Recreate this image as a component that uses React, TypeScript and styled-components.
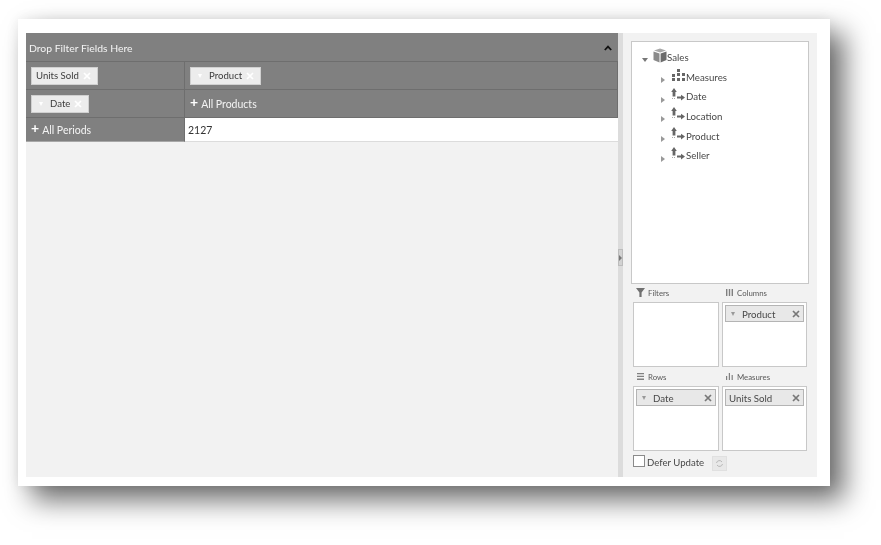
import styled, { createGlobalStyle } from "styled-components";

const GlobalStyle = createGlobalStyle`
    html, body {
        margin: 0;
        background-color: white;
    }
    body {
        font-family: Lato, "Open Sans", sans-serif;
    }
`;

const Page = styled.div`
    width: 881px;
    height: 545px;
    padding: 19px 0 0 18px;
    box-sizing: border-box;
    overflow: hidden;
`;

const Frame = styled.div`
    width: 812px;
    height: 467px;
    box-sizing: border-box;
    padding: 14px 13px 9px 8px;
    background-color: white;
    box-shadow: 14px 14px 26px rgba(0, 0, 0, 0.58), 0 0 12px rgba(0, 0, 0, 0.07);
`;

const Shell = styled.div`
    display: flex;
    height: 100%;
    background-color: #f2f2f2;
    filter: blur(0.3px);
`;

//Left pivot grid
const Pivot = styled.div`
    width: 592px;
    flex-shrink: 0;
`;

const FilterBar = styled.div`
    height: 29px;
    box-sizing: border-box;
    display: flex;
    align-items: center;
    justify-content: space-between;
    padding: 2px 6px 0 3px;
    background-color: #808080;
    border-bottom: 1px solid #6e6e6e;
    color: #f4f4f4;
    font-size: 10.4px;
`;

const PivotRow = styled.div<{ $h: number }>`
    display: grid;
    grid-template-columns: 159px 1fr;
    height: ${(props) => props.$h}px;
`;

const HeadCell = styled.div<{ $last?: boolean }>`
    display: flex;
    align-items: center;
    padding-left: 5px;
    background-color: #808080;
    border-bottom: 1px solid ${(props) => (props.$last ? "#a8a8a8" : "#6e6e6e")};
    border-right: 1px solid #6e6e6e;
    color: #f4f4f4;
    font-size: 10.5px;
`;

const ValueCell = styled.div`
    display: flex;
    align-items: center;
    padding-left: 3px;
    background-color: white;
    border-bottom: 1px solid #dcdcdc;
    color: #333;
    font-size: 10.5px;
`;

const Plus = styled.span`
    font-size: 14px;
    line-height: 10px;
    font-weight: 700;
    margin: -4px 3px 0 0;
    color: white;
`;

const GridChip = styled.div`
    display: flex;
    align-items: center;
    height: 16px;
    padding: 0 6px 0 4px;
    background-color: #ececec;
    border: 1px solid #d0d0d0;
    color: #3c3c3c;
    font-size: 9.6px;
`;

const ChipArrow = styled.span`
    width: 0;
    height: 0;
    border-left: 2.5px solid transparent;
    border-right: 2.5px solid transparent;
    border-top: 4px solid white;
    margin: 0 7px 0 3px;
`;

const ChipClose = styled.span<{ $color: string }>`
    display: flex;
    margin-left: 4px;
    color: ${(props) => props.$color};
`;

//Splitter
const Splitter = styled.div`
    width: 5px;
    flex-shrink: 0;
    display: flex;
    align-items: center;
    background-color: #dcdcdc;
`;

const SplitterHandle = styled.div`
    width: 5px;
    height: 17px;
    margin-top: 5px;
    display: flex;
    align-items: center;
    justify-content: center;
    background-color: #d2d2d2;
    border: 1px solid #bcbcbc;
    box-sizing: border-box;
    &::after {
        content: "";
        border-top: 3.5px solid transparent;
        border-bottom: 3.5px solid transparent;
        border-left: 3px solid #777;
    }
`;

//Right field list
const FieldPanel = styled.div`
    flex: 1;
    padding: 8px 8px 0 8px;
    display: flex;
    flex-direction: column;
`;

const TreeBox = styled.div`
    height: 243px;
    box-sizing: border-box;
    background-color: white;
    border: 1px solid #c8c8c8;
    padding: 5px 0 0 10px;
    color: #484848;
    font-size: 9.7px;
`;

const TreeRow = styled.div<{ $child?: boolean }>`
    display: flex;
    align-items: center;
    height: 19.7px;
    padding-left: ${(props) => (props.$child ? 19 : 0)}px;
`;

const Expander = styled.span<{ $open?: boolean }>`
    width: 0;
    height: 0;
    margin-top: 7px;
    ${(props) =>
        props.$open
            ? `border-left: 3.5px solid transparent;
               border-right: 3.5px solid transparent;
               border-top: 4px solid #777;
               margin-right: 5px;`
            : `border-top: 3.5px solid transparent;
               border-bottom: 3.5px solid transparent;
               border-left: 4px solid #999;
               margin-right: 6px;`}
`;

const TreeIcon = styled.svg`
    flex-shrink: 0;
    margin-top: -3px;
`;

const ZoneGrid = styled.div`
    display: grid;
    grid-template-columns: 86px 85px;
    column-gap: 3px;
    margin: 1px 0 0 2px;
`;

const Zone = styled.div`
    display: flex;
    flex-direction: column;
`;

const ZoneTitle = styled.div`
    height: 15px;
    padding: 0 0 2px 3px;
    display: flex;
    align-items: center;
    gap: 3px;
    color: #585858;
    font-size: 7.8px;
`;

const ZoneBox = styled.div`
    height: 65px;
    box-sizing: border-box;
    background-color: white;
    border: 1px solid #c8c8c8;
    padding: 2px;
    margin-bottom: 2px;
`;

const FieldChip = styled.div`
    height: 17px;
    box-sizing: border-box;
    display: flex;
    align-items: center;
    padding: 0 3px 0 3px;
    background-color: #e8e8e8;
    border: 1px solid #b4b4b4;
    color: #484848;
    font-size: 9.7px;
`;

const FieldArrow = styled.span`
    width: 0;
    height: 0;
    border-left: 2.5px solid transparent;
    border-right: 2.5px solid transparent;
    border-top: 4px solid #999;
    margin: 0 7px 0 2px;
`;

const FieldName = styled.span`
    flex: 1;
`;

const DeferRow = styled.div`
    display: flex;
    align-items: center;
    margin: 0 0 0 2px;
    color: #484848;
    font-size: 9.6px;
`;

const CheckBox = styled.span`
    width: 10px;
    height: 10px;
    background-color: white;
    border: 1px solid #8a8a8a;
    margin: -3px 2px 0 0;
`;

const RefreshButton = styled.span`
    display: flex;
    align-items: center;
    justify-content: center;
    width: 13px;
    height: 13px;
    margin: 3px 0 0 8px;
    background-color: #e8e8e8;
    border: 1px solid #e0e0e0;
`;

function CloseIcon({ color }: { color: string }) {
    return (
        <ChipClose $color={color}>
            <svg width="8" height="8" viewBox="0 0 8 8">
                <path d="M1 1 7 7M7 1 1 7" stroke="currentColor" strokeWidth="1.7" />
            </svg>
        </ChipClose>
    );
}

function CubeIcon() {
    return (
        <TreeIcon width="14" height="15" viewBox="0 0 14 15">
            <path d="M1 2.5 7 .5l6 2-5.8 2z" fill="#a8a8a8" />
            <path d="M.5 3.5l6 2v9l-6-2.5z" fill="#8a8a8a" />
            <path d="M7.6 5.5l5.9-2V12l-5.9 2.5z" fill="#6c6c6c" />
        </TreeIcon>
    );
}

function MeasuresIcon() {
    return (
        <TreeIcon width="15" height="14" viewBox="0 0 15 14">
            <path d="M1 6h3v3H1zM1 10h3v3H1zM6 1h3v3H6zM6 5h3v3H6zM6 10h3v3H6zM11 5h3v3h-3zM11 10h3v3h-3z" fill="#666" />
        </TreeIcon>
    );
}

function HierarchyIcon() {
    return (
        <TreeIcon width="15" height="14" viewBox="0 0 15 14">
            <path d="M3 0 5.8 4H4.4v4.5H1.6V4H.2z" fill="#666" />
            <path d="M6 8.6h4V6.8l4 2.8-4 2.8v-1.9H6z" fill="#666" />
            <path d="M1 10.5h1M3 10.5h1" stroke="#a8a8a8" strokeWidth="1" />
        </TreeIcon>
    );
}

function FilterIcon() {
    return (
        <svg width="9" height="9" viewBox="0 0 9 9">
            <path d="M0 0h9L5.6 4.5V9H3.4V4.5z" fill="#707070" />
        </svg>
    );
}

function ColumnsIcon() {
    return (
        <svg width="9" height="9" viewBox="0 0 9 9">
            <path d="M1 1h1.4v7H1zM3.8 1h1.4v7H3.8zM6.6 1H8v7H6.6z" fill="#808080" />
        </svg>
    );
}

function RowsIcon() {
    return (
        <svg width="9" height="9" viewBox="0 0 9 9">
            <path d="M1 1h7v1.3H1zM1 3.8h7v1.3H1zM1 6.6h7v1.3H1z" fill="#808080" />
        </svg>
    );
}

function BarsIcon() {
    return (
        <svg width="9" height="9" viewBox="0 0 9 9">
            <path d="M1 4h1.2v4H1zM3.8 1h1.2v7H3.8zM6.6 3H7.8v5H6.6z" fill="#808080" />
        </svg>
    );
}

const dimensions = ["Date", "Location", "Product", "Seller"];

function App() {
    return (
        <Page>
            <GlobalStyle />
            <Frame>
                <Shell>
                    <Pivot>
                        <FilterBar>
                            Drop Filter Fields Here
                            <svg width="8" height="6" viewBox="0 0 8 6">
                                <path d="M0.8 5 4 1.6 7.2 5" fill="none" stroke="#111" strokeWidth="1.8" />
                            </svg>
                        </FilterBar>
                        <PivotRow $h={28}>
                            <HeadCell>
                                <GridChip>
                                    Units Sold
                                    <CloseIcon color="#fff" />
                                </GridChip>
                            </HeadCell>
                            <HeadCell>
                                <GridChip>
                                    <ChipArrow />
                                    Product
                                    <CloseIcon color="#fff" />
                                </GridChip>
                            </HeadCell>
                        </PivotRow>
                        <PivotRow $h={28}>
                            <HeadCell>
                                <GridChip>
                                    <ChipArrow />
                                    Date
                                    <CloseIcon color="#fff" />
                                </GridChip>
                            </HeadCell>
                            <HeadCell>
                                <Plus>+</Plus>
                                All Products
                            </HeadCell>
                        </PivotRow>
                        <PivotRow $h={24}>
                            <HeadCell $last>
                                <Plus>+</Plus>
                                All Periods
                            </HeadCell>
                            <ValueCell>2127</ValueCell>
                        </PivotRow>
                    </Pivot>
                    <Splitter>
                        <SplitterHandle />
                    </Splitter>
                    <FieldPanel>
                        <TreeBox>
                            <TreeRow>
                                <Expander $open />
                                <CubeIcon />
                                Sales
                            </TreeRow>
                            <TreeRow $child>
                                <Expander />
                                <MeasuresIcon />
                                Measures
                            </TreeRow>
                            {dimensions.map((name) => (
                                <TreeRow $child key={name}>
                                    <Expander />
                                    <HierarchyIcon />
                                    {name}
                                </TreeRow>
                            ))}
                        </TreeBox>
                        <ZoneGrid>
                            <Zone>
                                <ZoneTitle>
                                    <FilterIcon />
                                    Filters
                                </ZoneTitle>
                                <ZoneBox />
                            </Zone>
                            <Zone>
                                <ZoneTitle>
                                    <ColumnsIcon />
                                    Columns
                                </ZoneTitle>
                                <ZoneBox>
                                    <FieldChip>
                                        <FieldArrow />
                                        <FieldName>Product</FieldName>
                                        <CloseIcon color="#777" />
                                    </FieldChip>
                                </ZoneBox>
                            </Zone>
                            <Zone>
                                <ZoneTitle>
                                    <RowsIcon />
                                    Rows
                                </ZoneTitle>
                                <ZoneBox>
                                    <FieldChip>
                                        <FieldArrow />
                                        <FieldName>Date</FieldName>
                                        <CloseIcon color="#777" />
                                    </FieldChip>
                                </ZoneBox>
                            </Zone>
                            <Zone>
                                <ZoneTitle>
                                    <BarsIcon />
                                    Measures
                                </ZoneTitle>
                                <ZoneBox>
                                    <FieldChip>
                                        <FieldName>Units Sold</FieldName>
                                        <CloseIcon color="#777" />
                                    </FieldChip>
                                </ZoneBox>
                            </Zone>
                        </ZoneGrid>
                        <DeferRow>
                            <CheckBox />
                            Defer Update
                            <RefreshButton>
                                <svg width="9" height="9" viewBox="0 0 9 9">
                                    <path d="M1.5 4A3 3 0 0 1 7 3M7.5 5A3 3 0 0 1 2 6" fill="none" stroke="#b8b8b8" strokeWidth="1" />
                                </svg>
                            </RefreshButton>
                        </DeferRow>
                    </FieldPanel>
                </Shell>
            </Frame>
        </Page>
    );
}

export default App;
